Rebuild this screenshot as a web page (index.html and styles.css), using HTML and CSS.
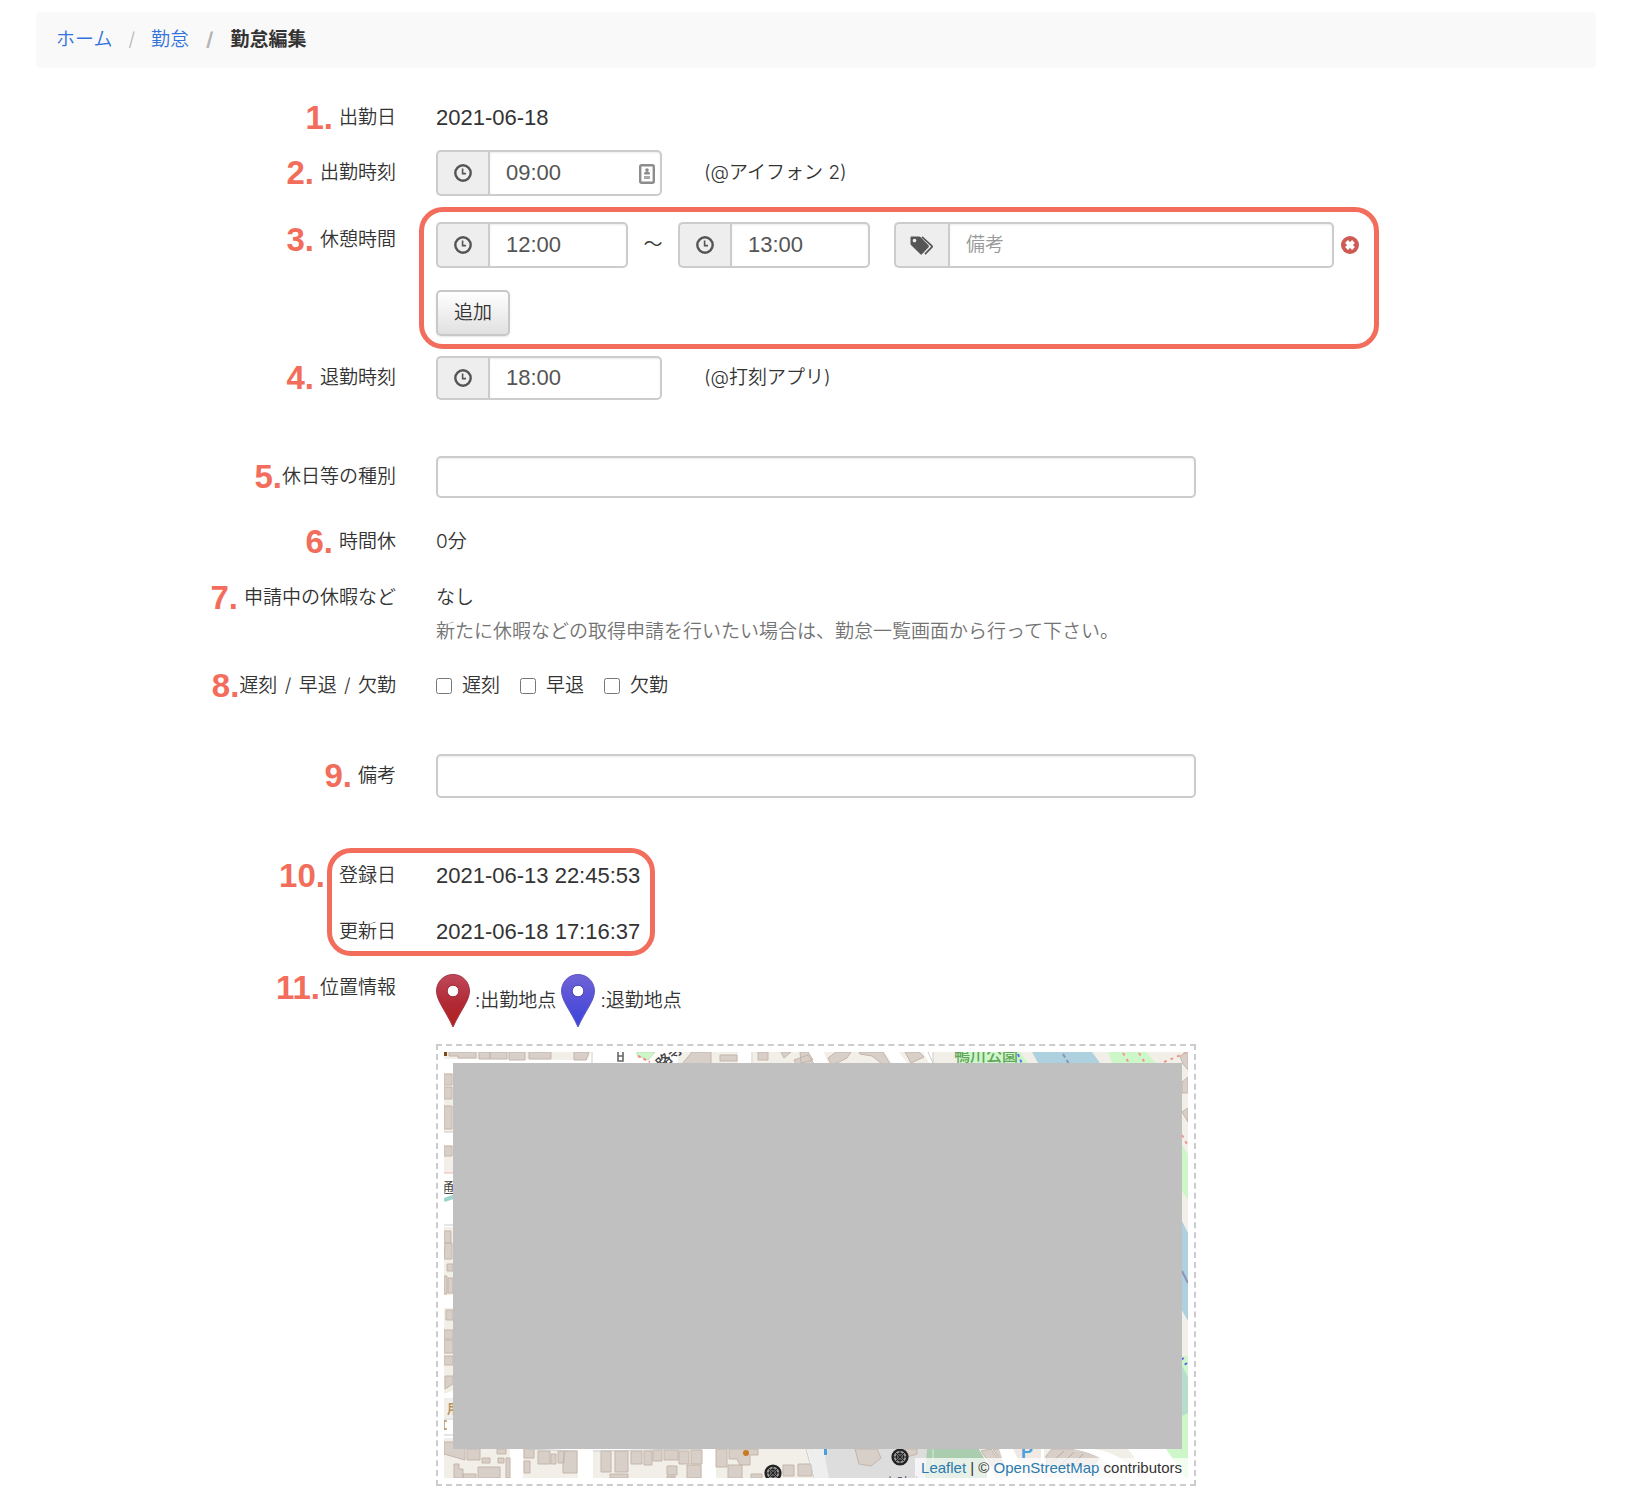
FILE: index.html
```html
<!DOCTYPE html>
<html lang="ja">
<head>
<meta charset="utf-8">
<meta name="viewport" content="width=device-width, initial-scale=1">
<title>勤怠編集</title>
<link rel="stylesheet" href="styles.css">
</head>
<body>
<svg class="sprite" aria-hidden="true">
  <symbol id="clock" viewBox="0 0 18 18">
    <circle cx="9" cy="9" r="7.7" fill="none" stroke="currentColor" stroke-width="2.4"/>
    <path d="M8.6 4.5V9.6H12" fill="none" stroke="currentColor" stroke-width="1.6"/>
  </symbol>
  <symbol id="wheel" viewBox="0 0 18 18">
    <circle cx="9" cy="9" r="7.4" fill="#999" stroke="#222" stroke-width="2.4"/>
    <circle cx="9" cy="9" r="3.6" fill="none" stroke="#222" stroke-width="1.2"/>
    <path d="M9 1v16M1 9h16M3.4 3.4l11.2 11.2M14.6 3.4L3.4 14.6" stroke="#222" stroke-width="1"/>
  </symbol>
</svg>

<nav class="breadcrumb" aria-label="パンくずリスト">
  <ol>
    <li><a href="#home">ホーム</a></li>
    <li><a href="#attendance">勤怠</a></li>
    <li class="current" aria-current="page">勤怠編集</li>
  </ol>
</nav>

<main>
<form class="form">
  <div class="row">
    <div class="label"><span class="num">1.</span><span>出勤日</span></div>
    <div class="field date">2021-06-18</div>
  </div>

  <div class="row row-start">
    <div class="label"><span class="num">2.</span><label for="start">出勤時刻</label></div>
    <div class="field inline">
      <div class="group group-wide">
        <span class="addon"><svg class="icon"><use href="#clock"/></svg></span>
        <input id="start" class="time" type="text" value="09:00">
        <svg class="card-icon" viewBox="0 0 16 20" aria-hidden="true">
          <rect x="1.2" y="1.2" width="13.6" height="17.6" rx="1.5" fill="#fff" stroke="#8c8c8c" stroke-width="2.4"/>
          <circle cx="8" cy="6" r="1.8" fill="#8c8c8c"/>
          <path d="M5.5 10V8.8Q8 6.6 10.5 8.8V10z" fill="#8c8c8c" stroke="#8c8c8c"/>
          <path d="M5 13.5h6" stroke="#a8a8a8" stroke-width="3"/>
        </svg>
      </div>
      <span>(@アイフォン 2)</span>
    </div>
  </div>

  <div class="row row-break">
    <div class="label"><span class="num">3.</span><label for="break-from">休憩時間</label></div>
    <div class="field">
      <div class="breaks">
        <div class="break">
          <div class="group">
            <span class="addon"><svg class="icon"><use href="#clock"/></svg></span>
            <input id="break-from" class="time" type="text" value="12:00">
          </div>
          <span class="tilde">〜</span>
          <div class="group">
            <span class="addon"><svg class="icon"><use href="#clock"/></svg></span>
            <input class="time" type="text" value="13:00" aria-label="休憩終了">
          </div>
          <div class="group group-note">
            <span class="addon">
              <svg class="icon-tags" viewBox="0 0 24 19">
                <path fill="currentColor" fill-rule="evenodd" d="M1.5 .5H9q1 0 1.7.7l7.800 8q1 1 0 2L12.200 18q-1 1-2 0L1.200 9.300Q.5 8.600.5 7.600v-6Q.5.500 1.500.500zM4.500 2.700a1.800 1.800 0 1 0 .01 0z"/>
                <path fill="none" stroke="currentColor" stroke-width="1.700" d="M12 .8l9.800 9q.8.700 0 1.400L15 18.200"/>
              </svg>
            </span>
            <input type="text" placeholder="備考" aria-label="休憩の備考">
          </div>
          <button type="button" class="remove" aria-label="削除">
            <svg viewBox="0 0 18 18">
              <circle cx="9" cy="9" r="9" fill="#cd5a54"/>
              <path d="M5.500 5.500l7 7M12.500 5.500l-7 7" stroke="#fff" stroke-width="4"/>
            </svg>
          </button>
        </div>
        <button type="button" class="btn">追加</button>
      </div>
    </div>
  </div>

  <div class="row row-near">
    <div class="label"><span class="num">4.</span><label for="end">退勤時刻</label></div>
    <div class="field inline">
      <div class="group group-wide group-low">
        <span class="addon"><svg class="icon"><use href="#clock"/></svg></span>
        <input id="end" class="time" type="text" value="18:00">
      </div>
      <span>(@打刻アプリ)</span>
    </div>
  </div>

  <div class="row row-far">
    <div class="label"><span class="num num-tight">5.</span><label for="kind">休日等の種別</label></div>
    <div class="field"><input id="kind" class="wide" type="text"></div>
  </div>

  <div class="row row-hours">
    <div class="label"><span class="num">6.</span><span>時間休</span></div>
    <div class="field">0分</div>
  </div>

  <div class="row row-top">
    <div class="label"><span class="num">7.</span><span>申請中の休暇など</span></div>
    <div class="field">
      <div>なし</div>
      <p class="help">新たに休暇などの取得申請を行いたい場合は、勤怠一覧画面から行って下さい。</p>
    </div>
  </div>

  <div class="row">
    <div class="label"><span class="num num-tight">8.</span><span>遅刻 <span class="sep">/</span> 早退 <span class="sep">/</span> 欠勤</span></div>
    <div class="field checks">
      <label><input type="checkbox">遅刻</label>
      <label><input type="checkbox">早退</label>
      <label><input type="checkbox">欠勤</label>
    </div>
  </div>

  <div class="row row-note">
    <div class="label"><span class="num">9.</span><label for="note">備考</label></div>
    <div class="field"><input id="note" class="wide wide-tall" type="text"></div>
  </div>

  <div class="dates">
    <div class="row">
      <div class="label"><span class="num num-out">10.</span><span>登録日</span></div>
      <div class="field date">2021-06-13 22:45:53</div>
    </div>
    <div class="row">
      <div class="label"><span>更新日</span></div>
      <div class="field date">2021-06-18 17:16:37</div>
    </div>
  </div>

  <div class="row row-top">
    <div class="label"><span class="num num-tight">11.</span><span>位置情報</span></div>
    <div class="field">
      <div class="legend">
        <svg class="pin" viewBox="0 0 34 54" aria-hidden="true">
          <defs><linearGradient id="red" x2="0" y2="1"><stop offset="0" stop-color="#c0485a"/><stop offset=".55" stop-color="#b02a34"/><stop offset="1" stop-color="#b31f1f"/></linearGradient></defs>
          <path d="M17 .5C26.500.5 33.500 8 33.500 17C33.500 27 24 37 17 53C10 37 .5 27 .5 17C.5 8 7.500.500 17 .500z" fill="url(#red)" stroke="#a23546"/>
          <circle cx="17" cy="17" r="5.800" fill="#fff" stroke="#9c2f3c"/>
        </svg>
        <span>:出勤地点</span>
        <svg class="pin" viewBox="0 0 34 54" aria-hidden="true">
          <defs><linearGradient id="blue" x2="0" y2="1"><stop offset="0" stop-color="#6f63d6"/><stop offset=".55" stop-color="#5350d8"/><stop offset="1" stop-color="#3a45dc"/></linearGradient></defs>
          <path d="M17 .5C26.500.5 33.500 8 33.500 17C33.500 27 24 37 17 53C10 37 .5 27 .5 17C.5 8 7.500.500 17 .500z" fill="url(#blue)" stroke="#6058c4"/>
          <circle cx="17" cy="17" r="5.800" fill="#fff" stroke="#4a44b4"/>
        </svg>
        <span>:退勤地点</span>
      </div>
      <div class="map-frame">
        <div class="map">
          <svg class="tiles" viewBox="0 0 744 426" preserveAspectRatio="xMidYMid slice" aria-hidden="true">
            <rect width="744" height="426" fill="#fff"/>
            <g fill="#f2efe9">
              <path d="M0 0h147l-3 8L0 7zM234 0h60v11h-60zM309 0h55l6 11h-61zM380 0h60l8 11h-64zM455 0h24l6 11h-22zM489 0h255v426H600V397h-110z"/>
              <path d="M0 21h20v59H0zM0 93h20v28H0zM0 175h20v68H0zM0 256h20v78L0 342zM0 346h20v20H0zM0 386h66v40H0zM79 397l55 2v27H79zM149 399l109-2v29H149zM272 397h90l8 29h-98z"/>
            </g>
            <path d="M0 0h3v4H0z" fill="#7a4a12"/>
            <g fill="#d8cfc9" stroke="#c4b5aa">
              <path d="M5 0h27v6H14V4H5zM35 0h11v7H35zM46 0h17v7H46zM65 0h16v8H65zM85 0h22v7H85zM130 0h15l-3 8h-12zM238 12l10-12h19v12zM276 3h17v6h-17zM314 0h10v8h-10zM337 0h10l-7 6zM350 8l14-5 6 9h-18zM356 0h8l5 8-12 3zM384 6l8-6h15l-4 6-10 5-6 1zM415 0h24l7 12h-8l-10-8-12-2zM461 0h14l5 5-13 6z"/>
              <path d="M0 22h8v11H0zM0 35h8v12H0zM0 54h8v23H0zM0 94h8v10H0zM0 179h7v12H0zM1 191h7v16H0zM3 212h6v7H3zM0 224h3v18H0zM4 226h5v15H4zM2 258h7v10H2zM0 278h9v9H0zM0 288h9v13H0zM0 304h9v9H0zM1 324h8v8l-8 5z"/>
              <path d="M0 390h21v18L0 402zM23 397h13v11H23zM38 406h8v5h-8zM53 397h9v5h-9zM54 406h6v5h-6zM10 412h5v5h4v9h-9zM19 422h13v4H19zM34 415h22v11H34zM62 406h4v20h-4zM80 397h10v9H80zM94 399h12v13H94zM107 402h5v10h-5zM114 399h6v12h-6zM121 399h12v22h-14v-10zM80 409h6v12h-6zM157 399h10v21h-10zM171 399h13v21h-13zM187 399h11v13h-11zM200 399h8v14h-8zM209 398h9v11h-9zM220 398h14v10h-14zM235 399h10v13h-10zM247 398h11v14h-11zM223 414h10v9h-10zM223 424h8v2h-8zM243 413h14v13h-14zM166 422h18v4h-18zM272 397h11v18h-11zM284 413h14v13h-14zM285 397h29v6h-8v10h-10l-3-6h-8zM307 422h11v4h-11zM339 413h11v11h-11zM354 412h14v12h-14z"/>
            </g>
            <path d="M148 0v12M308 0v12M489 0v12M484 0l5 11M0 173h12M0 367h12M0 383h12M0 80h12M79 397l55 2M149 399l109-2M362 397l8 29" fill="none" stroke="#ccc"/>
            <path d="M174 0v9h5V0M174 4h5" fill="none" stroke="#666" stroke-width="1.600"/>
            <path d="M193 0h18l-7 8-11-5z" fill="#cdf7c9" stroke="#b9dfb5"/>
            <path d="M194 4l12 6" stroke="#f48b86" stroke-width="2" stroke-dasharray="3 3"/>
            <text class="t-dark" x="0" y="0" transform="translate(218 18) rotate(-42)">路寺</text>
            <path d="M511 0h65l8 11h-68zM664 0h38l10 11h-44z" fill="#cdf7c9"/>
            <path d="M588 0h60l8 11h-62z" fill="#aed1df"/>
            <text class="t-park" x="510" y="9">鴨川公園</text>
            <path d="M574 2l4 10" stroke="#5a6cf0" stroke-width="2" stroke-dasharray="3 3"/>
            <path d="M619 2l6 10" stroke="#8d93b8" stroke-width="2" stroke-dasharray="4 3"/>
            <path d="M679 1l6 10M695 1l6 10M720 10L744 0M738 83l6 11M738 112l6 16" fill="none" stroke="#f4958f" stroke-width="2" stroke-dasharray="3 4"/>
            <path d="M736 4l8-4v18l-5-6zM738 30l6-5v16h-6zM738 60l6-4v14z" fill="#d8cfc9" stroke="#c4b5aa"/>
            <path d="M736 89l8 14v45l-8-12z" fill="#cdf7c9"/>
            <path d="M736 165l8 16v88l-8-14z" fill="#aed1df"/>
            <path d="M738 219l6 12" stroke="#8d93b8" stroke-width="2"/>
            <path d="M736 304h8v122h-22l-10-29h24z" fill="#cdf7c9"/>
            <path d="M736 310l8 15v36l-8 4z" fill="#b5dfcc"/>
            <path d="M738 306l6 9" stroke="#5a6cf0" stroke-width="3" stroke-dasharray="2 4"/>
            <path d="M0 121h12" stroke="#f4b5af"/>
            <path d="M0 148l12-4" stroke="#9cd5cd" stroke-width="4"/>
            <text class="t-side" x="-5" y="141">通</text>
            <text class="t-brown" x="3" y="361">用</text>
            <path d="M0 368v10M0 369h3M0 377h3" stroke="#b4946a" stroke-width="1.500"/>
            <path d="M373 426V397h120v29z" fill="#ddd"/>
            <path d="M384 397l-3 8 4 21h-14l-8-29z" fill="#eee"/>
            <path d="M411 397h22l4 9-10 8-12-2zM461 397h12v5l-10 3z" fill="#d8cfc9" stroke="#c4b5aa"/>
            <path d="M483 397h52l8 14v15h-62z" fill="#aacdaf"/>
            <path d="M489 397v29" stroke="#d8e8d8"/>
            <path d="M535 397h62v29h-45z" fill="#eee9e3"/>
            <path d="M537 399l10-2 9 14-8 3zM549 397h8l8 14h-7zM602 404l6-7h24l24 8-7 9h-46z" fill="#d8cfc9" stroke="#c4b5aa"/>
            <path d="M606 412l14-13M616 414l14-14M627 415l12-13" stroke="#b9ab9f"/>
            <path d="M555 397h14l14 29h-18zM629 397h20q32 4 45 29h-15q-14-22-50-29zM684 397h38l20 29h-36z" fill="#fff"/>
            <path d="M380 397h3v6h-3z" fill="#4b9fdc"/>
            <text class="t-parking" x="577" y="406">P</text>
            <circle cx="302" cy="401" r="3" fill="#c77a22"/>
            <use href="#wheel" x="320" y="412" width="18" height="18"/>
            <use href="#wheel" x="447" y="396" width="18" height="18"/>
            <text class="t-purple" x="440" y="435">上時方</text>
          </svg>
          <div class="mask"></div>
          <div class="credit"><a href="#leaflet">Leaflet</a> | © <a href="#osm">OpenStreetMap</a> contributors</div>
        </div>
      </div>
    </div>
  </div>
</form>
</main>
</body>
</html>
```
FILE: styles.css
```css
*,
*::before,
*::after {
  box-sizing: border-box;
}

body {
  margin: 0;
  padding: 12px 48px 12px 36px;
  background: #fff;
  color: #333;
  font-family: Inter, "Noto Sans CJK JP", sans-serif;
  font-size: 19px;
  font-weight: 350;
  line-height: 28px;
}

input,
button {
  font: inherit;
}

.sprite {
  display: none;
}

/* Breadcrumb */

.breadcrumb {
  padding: 14px 20px;
  border-radius: 5px;
  background: #f9f9f9;
}

.breadcrumb ol {
  display: flex;
  flex-wrap: wrap;
  margin: 0;
  padding: 0;
  list-style: none;
}

.breadcrumb li + li::before {
  content: "/";
  padding: 0 16px;
  color: #b5b5b5;
}

.breadcrumb a {
  color: #3273dc;
  text-decoration: none;
}

.breadcrumb .current {
  font-weight: 700;
}

.breadcrumb li.current::before {
  padding: 0 17px;
}

/* Form rows */

.form {
  display: flex;
  flex-direction: column;
  margin-top: 36px;
}

.row {
  display: grid;
  grid-template-columns: 360px minmax(0, 1fr);
  column-gap: 40px;
  align-items: center;
}

.row + .row {
  margin-top: 28px;
}

.row + .row-start {
  margin-top: 18px;
}

.row + .row-near {
  margin-top: 20px;
}

.row + .row-break {
  margin-top: 26px;
  align-items: start;
}

.row + .row-far {
  margin-top: 56px;
}

.row + .row-hours {
  margin-top: 30px;
}

.row + .row-note {
  margin-top: 54px;
}

.row-top {
  align-items: start;
}

.label {
  display: flex;
  justify-content: flex-end;
  align-items: center;
  gap: 6px;
  height: 28px;
}

.row-break .label {
  height: 36px;
}

.num {
  color: #f26d5b;
  font-family: "Liberation Sans", Arial, sans-serif;
  font-size: 33px;
  font-weight: 700;
}

.num-tight {
  margin-right: -6px;
}

.num-out {
  margin-right: 8px;
}

.sep {
  padding: 0 2px;
}

.date {
  font-family: "Liberation Sans", Arial, sans-serif;
  font-size: 22px;
}

.inline {
  display: flex;
  align-items: center;
  gap: 42px;
}

/* Inputs */

.group {
  position: relative;
  display: flex;
  width: 192px;
  height: 46px;
}

.group-wide {
  width: 226px;
}

.group-low {
  height: 44px;
}

.group-note {
  width: 440px;
  margin-left: 24px;
}

.addon {
  display: flex;
  flex: none;
  justify-content: center;
  align-items: center;
  width: 52px;
  border: 2px solid #ccc;
  border-right: 0;
  border-radius: 5px 0 0 5px;
  background: #eee;
  color: #555;
}

.group-note .addon {
  width: 54px;
}

.icon {
  width: 18px;
  height: 18px;
}

.icon-tags {
  width: 24px;
  height: 19px;
}

input[type="text"] {
  min-width: 0;
  padding: 0 16px;
  border: 2px solid #ccc;
  border-radius: 5px;
  background: #fff;
  box-shadow: inset 0 1px 2px rgba(0, 0, 0, 0.08);
  color: #555;
}

.group input[type="text"] {
  flex: 1;
  border-radius: 0 5px 5px 0;
}

input.time {
  font-family: "Liberation Sans", Arial, sans-serif;
  font-size: 22px;
}

input::placeholder {
  color: #999;
  opacity: 1;
}

.card-icon {
  position: absolute;
  top: 14px;
  right: 7px;
  width: 16px;
  height: 20px;
}

input.wide {
  display: block;
  width: 100%;
  max-width: 760px;
  height: 42px;
}

input.wide-tall {
  height: 44px;
}

/* Break times */

.breaks {
  position: relative;
  width: fit-content;
}

.breaks::after,
.dates::after {
  content: "";
  position: absolute;
  border: 5px solid #f26d5b;
  border-radius: 24px;
  pointer-events: none;
}

.breaks::after {
  inset: -15px -20px -13px -17px;
}

.break {
  display: flex;
  align-items: center;
  margin-bottom: 22px;
}

.tilde {
  width: 50px;
  text-align: center;
}

.remove {
  width: 18px;
  height: 18px;
  margin-left: 7px;
  padding: 0;
  border: 0;
  background: none;
}

.remove svg {
  display: block;
}

.btn {
  display: block;
  height: 46px;
  padding: 0 16px;
  border: 2px solid #c8c8c8;
  border-radius: 5px;
  background: linear-gradient(#fff, #e0e0e0);
  box-shadow: 0 1px 2px rgba(0, 0, 0, 0.1);
  color: #333;
}

.help {
  margin: 6px 0 -2px;
  color: #737373;
}

.checks {
  display: flex;
  gap: 20px;
}

.checks label {
  display: flex;
  align-items: center;
  gap: 10px;
}

.checks input {
  width: 16px;
  height: 16px;
  margin: 0;
}

.dates {
  position: relative;
  margin: 64px 0 28px;
}

.dates::after {
  top: -14px;
  bottom: -10px;
  left: 291px;
  width: 328px;
}

/* Location */

.legend {
  display: flex;
  align-items: center;
  gap: 5px;
}

.pin {
  width: 34px;
  height: 54px;
}

.map-frame {
  max-width: 760px;
  margin-top: 16px;
  padding: 6px;
  border: 2px dashed #ccc;
}

.map {
  position: relative;
  overflow: hidden;
}

.tiles {
  display: block;
  width: 100%;
  font-family: "Noto Sans CJK JP", sans-serif;
}

.mask {
  position: absolute;
  inset: 11px 6px 29px 9px;
  background: #c0c0c0;
}

.credit {
  position: absolute;
  right: 0;
  bottom: 0;
  padding: 0 6px;
  background: rgba(255, 255, 255, 0.7);
  font-family: "Liberation Sans", Arial, sans-serif;
  font-size: 15px;
  font-weight: 400;
  line-height: 20px;
}

.credit a {
  color: #2a7aad;
  text-decoration: none;
}

.t-dark {
  fill: #444;
  font-size: 15px;
  font-weight: 500;
}

.t-park {
  fill: #63a35c;
  font-size: 16px;
  font-weight: 500;
}

.t-side {
  fill: #444;
  font-size: 15px;
}

.t-brown {
  fill: #b4946a;
  font-size: 13px;
  font-weight: 700;
}

.t-parking {
  fill: #4b9fdc;
  font-family: "Liberation Sans", Arial, sans-serif;
  font-size: 18px;
  font-weight: 700;
}

.t-purple {
  fill: #4a3f6b;
  font-size: 13px;
}
```
